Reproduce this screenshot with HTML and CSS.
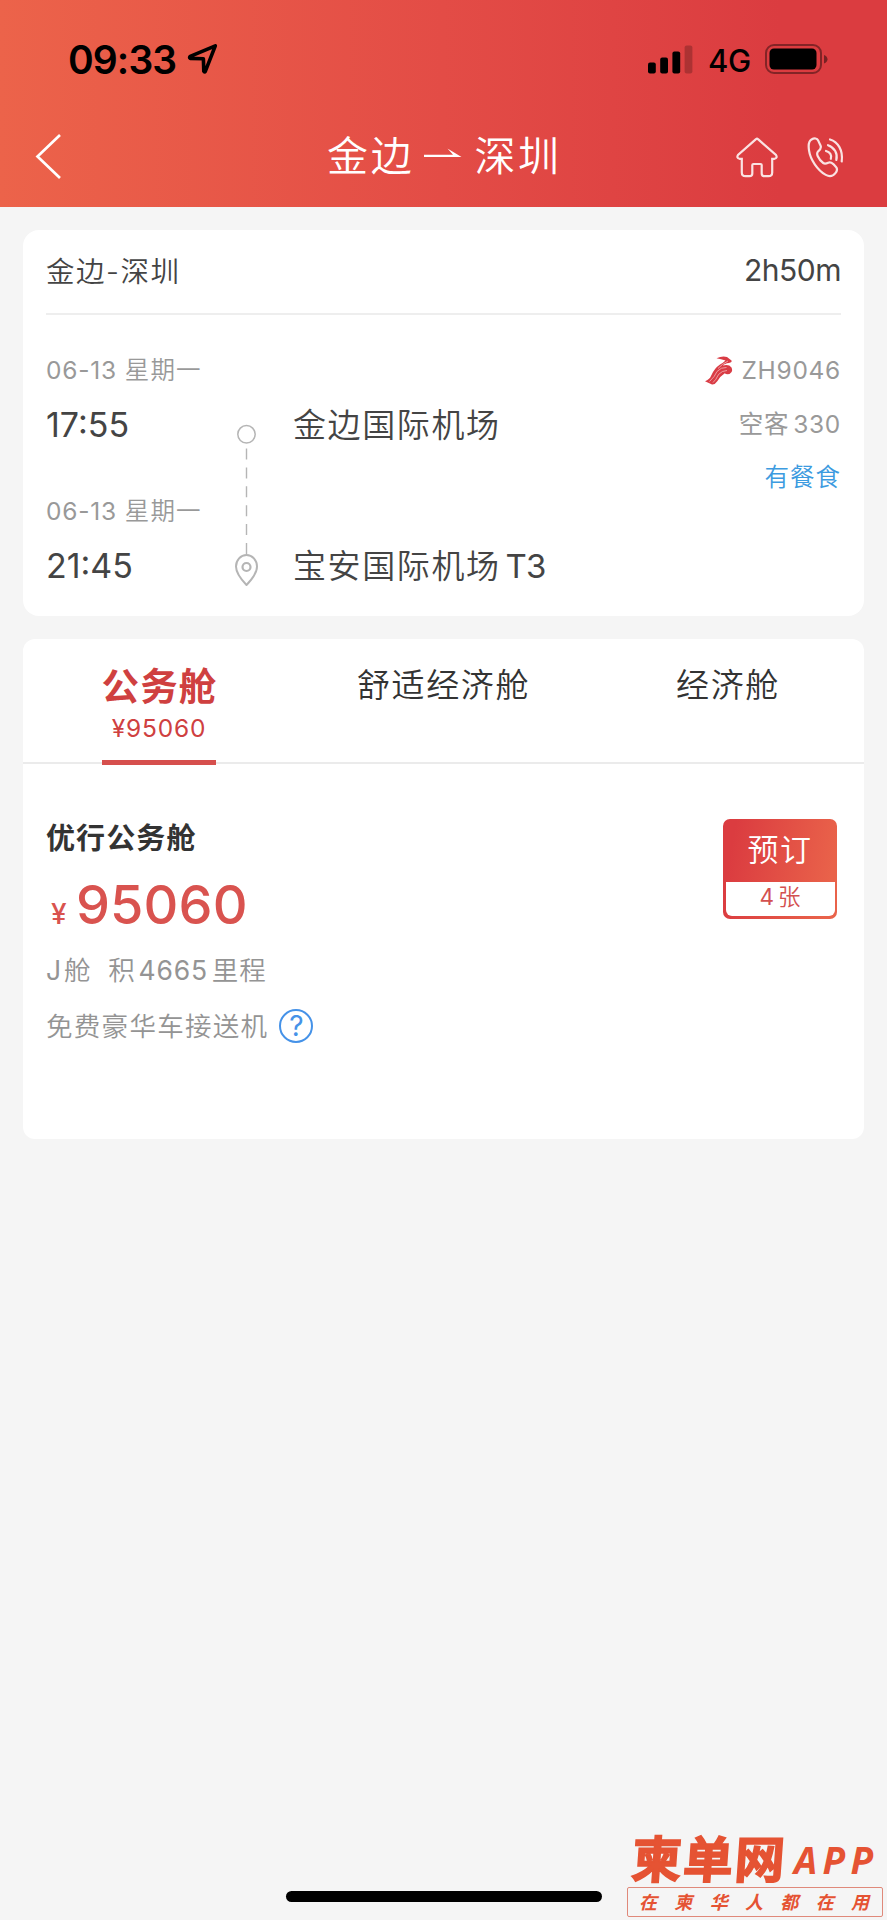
FILE: index.html
```html
<!DOCTYPE html>
<html lang="zh-CN">
<head>
<meta charset="utf-8">
<title>金边 - 深圳</title>
<link rel="stylesheet" href="styles.css">
</head>
<body>
<header class="header">
  <div class="status">
    <span class="clock">09:33</span>
    <svg class="location" width="32" height="32" viewBox="0 0 32 32"><path d="M28.300 2.800 3.200 13.400Q2 14.500 3.200 15.400L16.400 15.700 16.800 28.200Q17.500 29.600 18.400 28.200Z" fill="none" stroke="#000" stroke-width="3.600" stroke-linejoin="round"/></svg>
    <svg class="signal" width="45" height="29" viewBox="0 0 45 29"><rect x="0" y="17.500" width="7.800" height="11" rx="2"/><rect x="12.200" y="12.500" width="7.800" height="16" rx="2"/><rect x="24.400" y="6.500" width="7.800" height="22" rx="2"/><rect x="36.600" y="0.500" width="7.800" height="28" rx="2" opacity=".22"/></svg>
    <span class="network">4G</span>
    <svg class="battery" width="63" height="30" viewBox="0 0 63 30"><rect x="1" y="1" width="55" height="28" rx="8" fill="none" stroke="#000" stroke-opacity=".4" stroke-width="2"/><rect x="4.500" y="4.500" width="47" height="21" rx="4.500"/><path d="M59 11q3.500 1.500 3.500 4.300T59 19.600Z" opacity=".45"/></svg>
  </div>
  <div class="nav">
    <svg class="back" width="28" height="46" viewBox="0 0 28 46"><path d="M26 2 3.500 23.500 26 45" fill="none" stroke="#fff" stroke-width="2.700"/></svg>
    <h1 class="title"><span>金边</span><svg class="arrow" width="38" height="12" viewBox="0 0 38 12"><path d="M0 7.800H29L23.500 1.500 37.500 9.900H0Z" fill="#fff"/></svg><span>深圳</span></h1>
    <svg class="home" width="42" height="42" viewBox="0 0 42 42"><path d="M20 3.200Q21 2.200 22 3.200L40 19Q41.800 22 38.500 22.800H36.200V36.500Q36.200 40.200 32.500 40.200H28.500Q25.700 40.200 25.700 37.500V29Q25.700 28 24.500 28H17.500Q16.300 28 16.300 29V37.500Q16.300 40.200 13.500 40.200H9.500Q5.800 40.200 5.800 36.500V22.800H3.500Q.2 22 2 19Z" fill="none" stroke="#fff" stroke-opacity=".85" stroke-width="2.200"/></svg>
    <svg class="phone" width="38" height="42" viewBox="0 0 38 42"><g fill="none" stroke="#fff" stroke-opacity=".85" stroke-width="2.200" stroke-linecap="round" stroke-linejoin="round"><path d="M4.500 3.500C7.500 1.800 10 2.200 11.200 4.600L13.500 9.500C14.700 12 13.300 13.600 11.200 15.300C9.600 16.800 9.800 18 10.800 20.200C12 22.800 14 25.500 16.200 27C18 28.200 19.500 27.500 21.200 26.700C23.200 25.900 24.400 26.400 26.300 28.100L29 31C30.700 33 30.200 34.900 28.400 37.100C25.700 40.500 22.600 41 18.800 38.900C10.500 34.200 3.300 23.500 2 14.300C1.200 9 1.500 5.200 4.500 3.500Z"/><path d="M23 3.500C31 6 36.200 14 34.700 25.500M21 9.200C27.500 11.500 31 17.500 29.300 24M19 15C23 16.200 25 19 23.800 22.800"/></g></svg>
  </div>
</header>

<main>
  <section class="card flight">
    <div class="flight-head"><span class="route">金边-深圳</span><span class="duration">2h50m</span></div>
    <div class="flight-body">
      <div class="times">
        <div class="date">06-13 <span>星期一</span></div>
        <div class="time">17:55</div>
        <div class="date second">06-13 <span>星期一</span></div>
        <div class="time">21:45</div>
      </div>
      <svg class="rail" width="29" height="170" viewBox="0 0 29 170"><g fill="none" stroke="#b5b5b5"><circle cx="14.500" cy="14.300" r="8.700" stroke-width="1.500"/><path d="M14.500 28.500V134" stroke-dasharray="11 7.900" stroke-width="1.400"/><path d="M14.500 165Q4 154 4 146.500A10.500 11.500 0 0 1 25 146.500Q25 154 14.500 165Z" stroke-width="2" stroke-linejoin="round"/><circle cx="14.500" cy="147" r="4" stroke-width="2.200"/></g></svg>
      <div class="airports"><div>金边国际机场</div><div>宝安国际机场<span class="terminal">T3</span></div></div>
      <div class="plane">
        <div class="flight-no"><svg width="28" height="29" viewBox="0 0 28 29"><path d="M11.500 2.200Q17-.2 22 1L26.500 4.500Q27.500 6.500 24 7Q19.500 7.500 18 9.500Q24 8 26.500 11.500Q28.500 16 24.500 18Q21 18.500 19.800 17.300Q15.500 20 12.500 25Q10 28.800 7 28.500L0 25.200Q4.500 23.500 6 20Q9 12.500 15 8.500Q18.500 6.500 20.500 4.500Q16 3 11.500 2.200Z" fill="#d93c45"/><path d="M4.500 25.500Q10 20.500 12 15.500Q16 11 21.500 11.500M8 26.500Q11 24 13.500 18.500Q17 14.500 22 14.500M13 12.500Q17 8 23 5" fill="none" stroke="#f4b6b8" stroke-width=".8"/></svg><span>ZH9046</span></div>
        <div>空客<span class="model">330</span></div>
        <div class="meal">有餐食</div>
      </div>
    </div>
  </section>

  <section class="card cabins">
    <div class="tabs">
      <div class="tab active"><div class="tab-name">公务舱</div><div class="tab-price">¥95060</div></div>
      <div class="tab"><div class="tab-name">舒适经济舱</div></div>
      <div class="tab"><div class="tab-name">经济舱</div></div>
    </div>
    <div class="fare">
      <div class="fare-info">
        <div class="fare-name">优行公务舱</div>
        <div class="price"><span class="yen">¥</span><span class="amount">95060</span></div>
        <div class="miles"><span>J</span><span class="cls">舱</span><span>积</span><span class="points">4665</span><span>里程</span></div>
        <div class="perk"><span class="perk-text">免费豪华车接送机</span><span class="help">?</span></div>
      </div>
      <div class="book"><div class="book-top">预订</div><div class="book-left"><span>4</span>张</div></div>
    </div>
  </section>
</main>

<div class="home-bar"></div>
<div class="watermark">
  <div class="brand"><span class="brand-cn">柬单网</span><span class="brand-app">APP</span></div>
  <div class="slogan"><span>在</span><span>柬</span><span>华</span><span>人</span><span>都</span><span>在</span><span>用</span></div>
</div>
</body>
</html>
```

FILE: styles.css
```css
* { box-sizing: border-box; }
body {
  margin: 0;
  height: 1920px;
  position: relative;
  overflow: hidden;
  background: #f5f5f5;
  color: #444;
  font-family: Inter, "Noto Sans CJK SC", sans-serif;
}
svg { display: block; flex: none; }
.header {
  height: 207px;
  background: linear-gradient(90deg, #ec634a 0%, #e34c46 50%, #db3c40 88%, #db3c40 100%);
}
.status { height: 110px; padding: 8px 59px 0 68px; display: flex; align-items: center; color: #000; }
.clock { font-size: 39px; font-weight: 600; letter-spacing: -.9px; width: 119px; flex: none; white-space: nowrap; }
.signal { margin-left: auto; }
.network { font-size: 31px; font-weight: 500; width: 72px; flex: none; padding: 3px 0 0 15px; letter-spacing: -.3px; white-space: nowrap; }
.nav { height: 97px; padding: 0 42px 5px 34px; display: flex; align-items: center; color: #fff; }
.title {
  margin: 0 0 0 265px;
  width: 406px;
  display: flex;
  align-items: center;
  font-size: 41px;
  font-weight: 350;
  letter-spacing: 2.7px;
  line-height: 60px;
}
.arrow { margin: -6px 12px 0 10px; }
.home { margin: 1px 0 0 3px; }
.phone { margin: 1px 0 0 29px; }

.card { width: 841px; margin: 0 auto; background: #fff; }
.flight { height: 386px; margin-top: 23px; padding: 0 23px; border-radius: 16px; }
.flight-head {
  height: 85px;
  padding-bottom: 3px;
  border-bottom: 2px solid #eee;
  display: flex;
  justify-content: space-between;
  align-items: center;
  font-size: 28.5px;
}
.route { margin-top: -2px; letter-spacing: 1.5px; font-weight: 350; }
.duration { font-size: 30px; letter-spacing: -.5px; }
.flight-body { display: flex; }
.times { width: 186px; padding-top: 35px; }
.date { height: 40px; line-height: 40px; font-size: 24.5px; letter-spacing: .8px; color: #999; white-space: nowrap; }
.date span { font-weight: 350; letter-spacing: 1.2px; }
.second { margin-top: 36px; }
.time { height: 60px; line-height: 60px; margin-top: 5px; font-size: 34px; letter-spacing: 0; }
.rail { margin-top: 105px; }
.airports { margin: 80px 0 0 32px; font-size: 33px; font-weight: 350; letter-spacing: 1.6px; line-height: 60px; display: flex; flex-direction: column; gap: 81px; white-space: nowrap; }
.terminal { margin-left: 5px; letter-spacing: -.8px; font-weight: 400; }
.plane { margin-left: auto; padding-top: 29px; font-size: 24.5px; line-height: 53.5px; letter-spacing: .7px; color: #999; text-align: right; white-space: nowrap; }
.flight-no { display: flex; align-items: center; justify-content: flex-end; gap: 9px; }
.model { margin-left: 4px; }
.meal { color: #3c9be0; font-weight: 350; letter-spacing: 1px; }

.cabins { height: 500px; margin-top: 23px; border-radius: 12px; }
.tabs { height: 125px; display: grid; grid-template-columns: 272px 297px 272px; justify-items: center; border-bottom: 2px solid #ebebeb; }
.tab { height: 126px; padding-top: 18px; font-size: 33px; font-weight: 350; letter-spacing: 1.6px; color: #333; white-space: nowrap; }
.tab-name { height: 57px; line-height: 57px; }
.active { width: 114px; border-bottom: 5px solid #d64f4d; color: #cf4040; display: flex; flex-direction: column; align-items: center; }
.active .tab-name { font-size: 37.5px; line-height: 59px; font-weight: 700; letter-spacing: 1.2px; margin-right: -1px; }
.tab-price { height: 28px; line-height: 28px; font-size: 24.5px; font-weight: 400; letter-spacing: .8px; }
.fare { display: flex; justify-content: space-between; padding: 54px 27px 0 23px; }
.fare-name { height: 40px; line-height: 42px; font-size: 29px; font-weight: 700; letter-spacing: 1.1px; color: #333; }
.price { height: 60px; margin-top: 17px; line-height: 60px; display: flex; align-items: baseline; color: #d9534f; font-weight: 500; }
.yen { width: 30px; padding-left: 5px; font-size: 28px; }
.amount { font-size: 54px; letter-spacing: .1px; }
.miles { height: 40px; margin-top: 15px; line-height: 40px; display: flex; font-size: 26.5px; font-weight: 350; letter-spacing: .8px; color: #949494; }
.miles > :first-child { margin-right: 2px; font-weight: 400; }
.cls { margin-right: 17px; }
.points { margin: 0 4px 0 3px; font-weight: 400; }
.perk { height: 40px; margin-top: 16px; display: flex; align-items: center; font-size: 26.5px; font-weight: 350; letter-spacing: 1.3px; color: #949494; white-space: nowrap; }
.perk-text { margin-top: -4px; }
.help { width: 34px; height: 34px; margin-left: 11px; border: 2px solid #4592e8; border-radius: 50%; font-size: 28px; font-weight: 400; line-height: 31px; letter-spacing: 0; text-align: center; color: #4592e8; }
.book { width: 114px; height: 100px; margin-top: 1px; padding: 0 2.5px 3px; border-radius: 7px; background: linear-gradient(100deg, #db3c40 10%, #e9624a 90%); text-align: center; }
.book-top { height: 63px; line-height: 61px; font-size: 31px; letter-spacing: 1.5px; color: #fff; font-weight: 350; }
.book-left { height: 34px; line-height: 30px; border-radius: 0 0 6px 6px; background: #fff; color: #d35050; font-size: 22.5px; font-weight: 350; }
.book-left span { margin-right: 4px; font-weight: 400; }

.home-bar { position: absolute; left: 286px; top: 1891px; width: 316px; height: 11px; border-radius: 6px; background: #000; }
.watermark { position: absolute; left: 627px; top: 1828px; width: 256px; color: #e55333; }
.brand { height: 59px; padding: 0 0 4px 5px; display: flex; align-items: center; font-weight: 700; white-space: nowrap; }
.brand-cn { width: 162px; font-size: 50px; letter-spacing: 1.500px; transform: skewX(-4deg); -webkit-text-stroke: 1.500px #e55333; }
.brand-app { font-family: "Noto Sans", sans-serif; font-size: 37px; letter-spacing: 5.3px; font-style: italic; padding-top: 7px; }
.slogan { height: 30px; padding: 1px 13px 0 11px; border: 1.500px solid #e0897a; border-radius: 2px; display: flex; justify-content: space-between; align-items: center; font-size: 18px; font-weight: 600; font-style: italic; line-height: 28px; }
```
